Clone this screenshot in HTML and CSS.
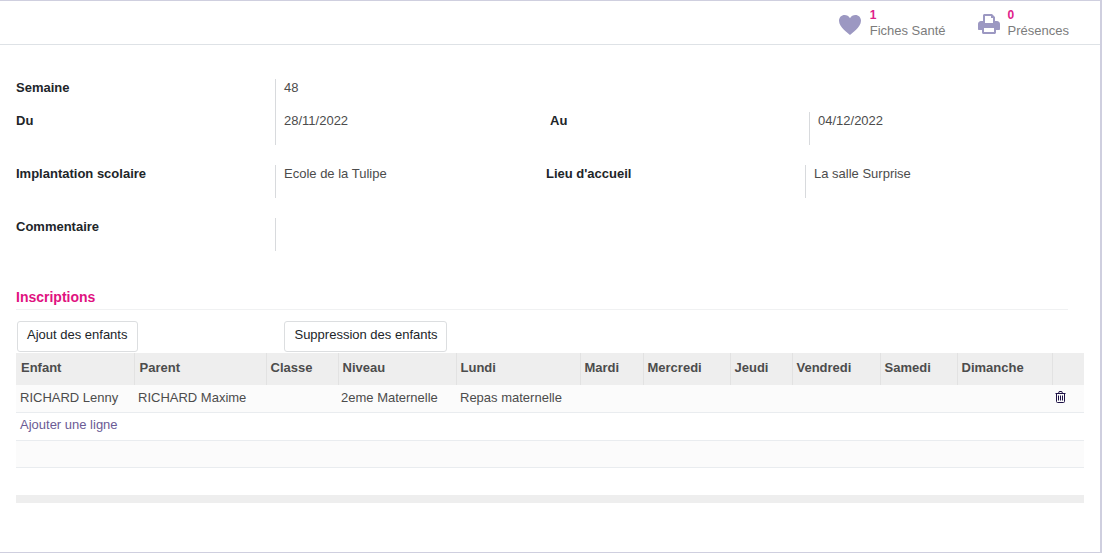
FILE: index.html
```html
<!DOCTYPE html>
<html lang="fr">
<head>
    <meta charset="UTF-8">
    <meta name="viewport" content="width=device-width, initial-scale=1.0">
    <title>Inscriptions</title>
    <link rel="stylesheet" href="styles.css">
</head>
<body>
<div class="sheet">
    <!-- Stat buttons -->
    <div class="button-box">
        <div class="stat-button stat-sante">
            <svg class="stat-icon" width="24" height="22" viewBox="0 0 24 22"><path d="M12 21 C10.5 19.6 1 13.2 1 6.8 C1 3.4 3.5 1 6.6 1 C8.8 1 10.8 2.2 12 4.2 C13.2 2.2 15.2 1 17.4 1 C20.5 1 23 3.4 23 6.8 C23 13.2 13.5 19.6 12 21 Z"/></svg>
            <div class="stat-text">
                <span class="stat-value">1</span>
                <span class="stat-label">Fiches Santé</span>
            </div>
        </div>
        <div class="stat-button stat-presences">
            <svg class="stat-icon" width="22" height="20" viewBox="0 0 22 20"><path fill-rule="evenodd" d="M5 1.5 C5 .7 5.7 0 6.5 0 H14 L17 3 V7 H19 C20.6 7 22 8.4 22 10 V15 C22 15.6 21.6 16 21 16 H18 V18.5 C18 19.3 17.3 20 16.5 20 H5.5 C4.7 20 4 19.3 4 18.5 V16 H1 C.4 16 0 15.6 0 15 V10 C0 8.4 1.4 7 3 7 H5 Z M7 2 V9 H15 V4 H13 V2 Z M6 14 V18 H16 V14 Z"/></svg>
            <div class="stat-text">
                <span class="stat-value">0</span>
                <span class="stat-label">Présences</span>
            </div>
        </div>
    </div>

    <div class="sheet-body">
        <!-- Fields -->
        <div class="field-row field-row-double">
            <div class="field-labels">
                <label>Semaine</label>
                <label>Du</label>
            </div>
            <div class="field-values">
                <span>48</span>
                <span>28/11/2022</span>
            </div>
            <label class="label-au">Au</label>
            <div class="value-au">04/12/2022</div>
        </div>

        <div class="field-row">
            <label>Implantation scolaire</label>
            <div class="field-value">Ecole de la Tulipe</div>
            <label>Lieu d'accueil</label>
            <div class="field-value">La salle Surprise</div>
        </div>

        <div class="field-row">
            <label>Commentaire</label>
            <div class="field-value"></div>
        </div>

        <!-- Inscriptions -->
        <h2 class="section-title">Inscriptions</h2>
        <div class="actions">
            <button class="btn btn-ajout" type="button">Ajout des enfants</button>
            <button class="btn btn-suppression" type="button">Suppression des enfants</button>
        </div>

        <table class="list-table">
            <colgroup>
                <col class="col-enfant">
                <col class="col-parent">
                <col class="col-classe">
                <col class="col-niveau">
                <col class="col-lundi">
                <col class="col-mardi">
                <col class="col-mercredi">
                <col class="col-jeudi">
                <col class="col-vendredi">
                <col class="col-samedi">
                <col class="col-dimanche">
                <col class="col-trash">
            </colgroup>
            <thead>
                <tr>
                    <th>Enfant</th>
                    <th>Parent</th>
                    <th>Classe</th>
                    <th>Niveau</th>
                    <th>Lundi</th>
                    <th>Mardi</th>
                    <th>Mercredi</th>
                    <th>Jeudi</th>
                    <th>Vendredi</th>
                    <th>Samedi</th>
                    <th>Dimanche</th>
                    <th></th>
                </tr>
            </thead>
            <tbody>
                <tr class="row-odd row-short">
                    <td>RICHARD Lenny</td>
                    <td>RICHARD Maxime</td>
                    <td></td>
                    <td class="cell-niveau">2eme Maternelle</td>
                    <td>Repas maternelle</td>
                    <td></td>
                    <td></td>
                    <td></td>
                    <td></td>
                    <td></td>
                    <td></td>
                    <td class="cell-trash">
                        <svg width="11" height="12" viewBox="0 0 11 12"><path fill="none" stroke="#1d1145" d="M1.5 3 V10.5 Q1.5 11.5 2.5 11.5 H8.5 Q9.5 11.5 9.5 10.5 V3 M.5 2.5 H10.5 M3.5 2.5 L4.2 .5 H6.8 L7.5 2.5 M3.5 4.5 V9.5 M5.5 4.5 V9.5 M7.5 4.5 V9.5"/></svg>
                    </td>
                </tr>
                <tr class="row-add">
                    <td colspan="12"><a class="add-line" href="#">Ajouter une ligne</a></td>
                </tr>
                <tr class="row-odd row-short">
                    <td colspan="12"></td>
                </tr>
                <tr class="row-last">
                    <td colspan="12"></td>
                </tr>
            </tbody>
            <tfoot>
                <tr>
                    <td colspan="12"></td>
                </tr>
            </tfoot>
        </table>
    </div>
</div>
</body>
</html>
```

FILE: styles.css
```css
* {
    box-sizing: border-box;
}

html, body {
    height: 100%;
}

body {
    margin: 0;
    font-family: "Liberation Sans", Arial, sans-serif;
    font-size: 13px;
    line-height: 17px;
    color: #4c4c4c;
    background: #fff;
}

label {
    display: block;
    font-weight: bold;
    color: #212529;
}

/* Sheet */
.sheet {
    height: 553px;
    border-top: 1px solid #cfcfdf;
    border-right: 2px solid #cfcfdf;
    border-bottom: 1px solid #cfcfdf;
}

.sheet-body {
    padding: 34px 0 0 16px;
}

/* Stat buttons */
.button-box {
    display: flex;
    justify-content: flex-end;
    height: 44px;
    padding: 6px 31px 0 0;
    border-bottom: 1px solid #dee2e6;
}

.stat-button {
    display: flex;
    align-items: flex-start;
}

.stat-sante {
    margin-right: 32px;
}

.stat-icon {
    margin-top: 7px;
    margin-right: 8px;
    fill: #9c98c2;
}

.stat-text {
    display: flex;
    flex-direction: column;
    line-height: 16px;
}

.stat-value {
    font-weight: bold;
    font-size: 12px;
    line-height: 16px;
    color: #e0218a;
}

.stat-label {
    color: #7c7c7c;
}

/* Fields */
.field-row {
    display: grid;
    grid-template-columns: 259px 271px 259px 1fr;
    height: 33px;
    margin-bottom: 20px;
}

.field-value {
    padding-left: 8px;
    border-left: 1px solid #d8dadd;
}

.field-row-double {
    grid-template-columns: 259px 275px 259px 1fr;
    height: 66px;
}

.field-labels label {
    height: 33px;
}

.field-values {
    display: flex;
    flex-direction: column;
    padding-left: 8px;
    border-left: 1px solid #d8dadd;
}

.field-values span {
    height: 33px;
}

.label-au {
    margin-top: 33px;
}

.value-au {
    margin-top: 33px;
    padding-left: 8px;
    border-left: 1px solid #d8dadd;
}

.section-title {
    margin: 37px 32px 0 0;
    padding-bottom: 3px;
    font-size: 14px;
    font-weight: bold;
    line-height: 18px;
    color: #e0127f;
    border-bottom: 1px solid #f0f1f2;
}

/* Buttons */
.actions {
    display: flex;
    padding: 11px 0 1px 1px;
}

.btn {
    height: 31px;
    padding: 0 9px 4px;
    font: inherit;
    color: #212529;
    background: #fff;
    border: 1px solid #dcdee0;
    border-radius: 3px;
}

.btn-ajout {
    margin-right: 146px;
    padding-right: 10px;
}

.btn-suppression {
    padding-right: 8px;
}

/* Table */
.list-table {
    width: 1068px;
    table-layout: fixed;
    border-collapse: collapse;
}

.col-enfant { width: 118px; }
.col-parent { width: 132px; }
.col-classe { width: 72px; }
.col-niveau { width: 118px; }
.col-lundi { width: 124px; }
.col-mardi { width: 63px; }
.col-mercredi { width: 87px; }
.col-jeudi { width: 62px; }
.col-vendredi { width: 88px; }
.col-samedi { width: 77px; }
.col-dimanche { width: 95px; }
.col-trash { width: 32px; }

.list-table th {
    height: 32px;
    padding: 0 4px 4px;
    font-weight: bold;
    text-align: left;
    background: #eeeeee;
    border-right: 1px solid #e2e2e2;
}

.list-table th:nth-child(-n+2) {
    padding-left: 5px;
}

.list-table th:last-child {
    border-right: 0;
}

.list-table td {
    height: 28px;
    padding: 0 4px 2px;
    border-bottom: 1px solid #e9ecef;
}

.list-table .row-short td {
    height: 27px;
}

.list-table .row-add td {
    padding-bottom: 4px;
}

.list-table .cell-niveau {
    padding-left: 3px;
}

.list-table .row-odd td {
    background: #fbfbfb;
}

.list-table .row-last td {
    border-bottom: 0;
}

.list-table tfoot td {
    height: 8px;
    padding: 0;
    background: #eeeeee;
    border-bottom: 0;
}

.list-table .cell-trash {
    padding-left: 3px;
}

.cell-trash svg {
    display: block;
}

.add-line {
    color: #6b5b95;
    text-decoration: none;
}
```
